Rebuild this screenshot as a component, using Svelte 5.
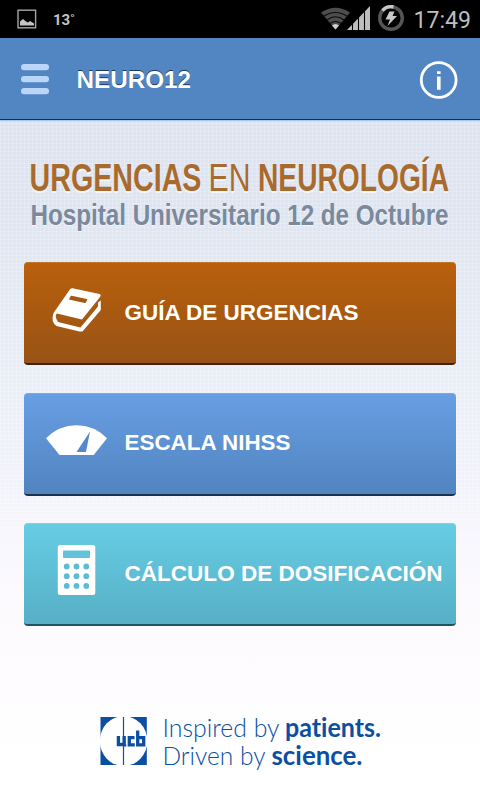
<script lang="ts">
	type Item = { id: string; label: string; width: number; baseline: number };

	const items: Item[] = [
		{ id: 'guia', label: 'GUÍA DE URGENCIAS', width: 234, baseline: 58 },
		{ id: 'escala', label: 'ESCALA NIHSS', width: 166, baseline: 57 },
		{ id: 'calculo', label: 'CÁLCULO DE DOSIFICACIÓN', width: 318, baseline: 58 }
	];

	const keys = [0, 1, 2].flatMap((row) => [0, 1, 2].map((col) => ({ x: 42.7 + col * 9.8, y: 43.5 + row * 9.7 })));
</script>

<div class="screen">
	<div class="status">
		<svg width="480" height="38" viewBox="0 0 480 38">
			<rect x="18" y="10.2" width="17.6" height="17.6" fill="none" stroke="#a5a5a5" stroke-width="1.4" />
			<path d="M20 25.5v-4l3-2.5 3 2.5 2 1 2-1.5 4 2.5v2z" fill="#c4c4c4" />
			<text class="status__temp" x="53" y="25" textLength="22">13˚</text>
			<path d="M321 12.5Q335.5 3 350 12.5L335.5 29.5z" fill="#4d4d4d" />
			<g fill="none" stroke="#0c0c0c" stroke-width="1.2">
				<path d="M323.5 16.5Q335.5 8.5 347.5 16.5" />
				<path d="M327 20Q335.5 13.5 344 20" />
				<path d="M330 23.5Q335.5 19.5 341 23.5" />
			</g>
			<path d="M332 25.5Q335.5 22.5 339 25.5L335.5 29.5z" fill="#d0d0d0" />
			<path d="M347 30L370 6V30z" fill="#bebebe" />
			<path d="M352.5 10v21M358.5 5v26M364.5 5v26" stroke="#000" stroke-width="1.1" />
			<circle cx="391" cy="18" r="11.3" fill="none" stroke="#555" stroke-width="3.4" />
			<path d="M382.5 10.5A11.3 11.3 0 0 1 393.5 7" fill="none" stroke="#c8c8c8" stroke-width="3.4" />
			<path d="M389.500 11.500h5l-2 4.500h4.500l-9.500 10 2.500-6.500h-4.500z" fill="#c8c8c8" />
			<text class="status__clock" x="413.5" y="27.7" textLength="57.5" lengthAdjust="spacingAndGlyphs">17:49</text>
		</svg>
	</div>

	<header class="bar">
		<svg width="480" height="81" viewBox="0 0 480 81">
			<g fill="#bad5f7">
				<rect x="21" y="26" width="28" height="6.2" rx="3" />
				<rect x="21" y="38" width="28" height="6.2" rx="3" />
				<rect x="21" y="50" width="28" height="6.2" rx="3" />
			</g>
			<text class="bar__title" x="76.5" y="50" textLength="114.5" lengthAdjust="spacingAndGlyphs">NEURO12</text>
			<circle cx="438.7" cy="42" r="17.4" fill="none" stroke="#fff" stroke-width="2.8" />
			<path d="M437 33.200h3.600v2.800H437zM437 38.500h3.600v13.200H437z" fill="#fff" />
		</svg>
	</header>

	<main class="content">
		<svg class="heading" width="480" height="142" viewBox="0 0 480 142">
			<g class="heading__main">
				<text class="strong" x="29.5" y="71" textLength="172" lengthAdjust="spacingAndGlyphs">URGENCIAS</text>
				<text x="208.5" y="71" textLength="42" lengthAdjust="spacingAndGlyphs">EN</text>
				<text class="strong" x="258" y="71" textLength="191" lengthAdjust="spacingAndGlyphs">NEUROLOGÍA</text>
			</g>
			<text class="heading__sub" x="30.5" y="105" textLength="418" lengthAdjust="spacingAndGlyphs">Hospital Universitario 12 de Octubre</text>
		</svg>

		<nav class="menu">
			{#each items as item (item.id)}
				<a href="#{item.id}" class="card card--{item.id}">
					<svg width="432" height="101" viewBox="0 0 432 101">
						{#if item.id === 'guia'}
							<path d="M48.5 26.3L75.5 32Q77.5 32.5 76 35L58 57.5L33 51.5Q30 53.5 34 60L56.5 65.5L74 44.5V40.5L76.8 38.5V48L58.5 69.5H55.5L32.5 64Q26.5 60 29.5 51L45.5 28Q46.500 26 48.5 26.3z" fill="#fff" />
							<path d="M47.500 34.500L62.500 37.700L61 40.300L46 37z" fill="#a65811" stroke="#a65811" stroke-width="1.6" stroke-linejoin="round" />
						{:else if item.id === 'escala'}
							<path d="M22 45.300Q35 32.300 52.500 32.300T83 45.300L69.700 62H35.500z" fill="#fff" />
							<path d="M66 38.500L62 59H52.500z" fill="#5789ca" />
						{:else}
							<rect x="33.8" y="22" width="37.5" height="50" rx="2.5" fill="#fff" />
							<rect x="39" y="27.5" width="27" height="7.5" rx="1" fill="#62c3db" />
							{#each keys as key}
								<circle cx={key.x} cy={key.y} r="2.9" fill="#5dbbd2" />
							{/each}
						{/if}
						<text class="card__label" x="100.5" y={item.baseline} textLength={item.width} lengthAdjust="spacingAndGlyphs">{item.label}</text>
					</svg>
				</a>
			{/each}
		</nav>
	</main>

	<footer class="brand">
		<svg width="480" height="90" viewBox="0 0 480 90">
			<path d="M100.500 7h46.300v48h-46.300z" fill="#0b4fa2" />
			<ellipse cx="123.6" cy="31" rx="23.8" ry="25" fill="#fff" />
			<path d="M123.500 7v48" stroke="#0b4fa2" stroke-width="1.2" />
			<g fill="none" stroke="#0b4fa2" stroke-width="3.3">
				<path d="M118.400 26v8.500h5.800V26M124.700 34.500v2" />
				<path d="M134.500 27.600h-5.200v7.300h5.500" />
				<path d="M137.700 20.500v14.400h6v-7.300h-6" />
			</g>
			<g class="brand__text">
				<text class="light" x="162.5" y="26.5" textLength="117" lengthAdjust="spacingAndGlyphs">Inspired by</text>
				<text class="bold" x="285" y="26.5" textLength="96" lengthAdjust="spacingAndGlyphs">patients.</text>
				<text class="light" x="162.5" y="55" textLength="103" lengthAdjust="spacingAndGlyphs">Driven by</text>
				<text class="bold" x="271.5" y="55" textLength="91" lengthAdjust="spacingAndGlyphs">science.</text>
			</g>
		</svg>
	</footer>
</div>

<style>
	:global(body) {
		margin: 0;
		background: #fff;
	}

	.screen {
		display: flex;
		flex-direction: column;
		width: 480px;
		height: 800px;
		overflow: hidden;
		font-family: 'Liberation Sans', Arial, sans-serif;
		background:
			repeating-linear-gradient(90deg, rgba(255, 255, 255, 0.2) 0 1px, transparent 1px 4px),
			repeating-linear-gradient(0deg, rgba(255, 255, 255, 0.2) 0 1px, transparent 1px 4px),
			linear-gradient(#dce3ef 120px, #dfe5f0 220px, #edf0f8 420px, #f8f7fd 550px, #fefbfe 640px, #fff 760px);
	}

	svg {
		display: block;
	}

	svg text {
		white-space: nowrap;
	}

	.status {
		height: 38px;
		background: #000;
	}

	.status__temp {
		font: bold 15px Roboto, sans-serif;
		fill: #c4c4c4;
	}

	.status__clock {
		font: 24.5px Roboto, sans-serif;
		fill: #bebebe;
	}

	.bar {
		height: 81px;
		background: #5286c3;
		border-bottom: 1px solid #14304f;
		box-shadow: 0 1px 1px #a9c8e8;
	}

	.bar__title {
		font-size: 23.5px;
		font-weight: bold;
		fill: #fff;
		text-shadow: 0 -1px 0 #1d3a5f;
	}

	.content {
		height: 590px;
	}

	.heading {
		overflow: visible;
	}

	.heading__main {
		font-size: 38.5px;
		fill: #a96a2e;
		text-shadow: 0 2px 0 #f5f6fa;
	}

	.strong {
		font-weight: bold;
	}

	.heading__sub {
		font-size: 29.5px;
		font-weight: bold;
		fill: #7a899c;
		text-shadow: 0 1px 0 #f5f6fa;
	}

	.menu {
		display: flex;
		flex-direction: column;
		gap: 27.5px;
		padding: 0 24px;
	}

	.card {
		height: 101px;
		border-radius: 4px;
		border-bottom: 2px solid #17344f;
		box-shadow: inset 0 1px 0 rgba(255, 255, 255, 0.12);
		text-decoration: none;
	}

	.card--guia {
		background: linear-gradient(#b9600c, #985315);
		border-color: #40240a;
	}

	.card--escala {
		background: linear-gradient(#689fe4, #5184c0);
	}

	.card--calculo {
		background: linear-gradient(#67cde4, #56afc6);
		border-color: #205465;
	}

	.card__label {
		font-size: 22.5px;
		font-weight: bold;
		fill: #fff;
	}

	.brand {
		height: 90px;
	}

	.brand__text {
		font-family: Lato, sans-serif;
		font-size: 26px;
		font-variant-ligatures: none;
		fill: #0b4fa2;
	}

	.light {
		font-weight: 300;
	}

	.bold {
		font-weight: 700;
	}
</style>
